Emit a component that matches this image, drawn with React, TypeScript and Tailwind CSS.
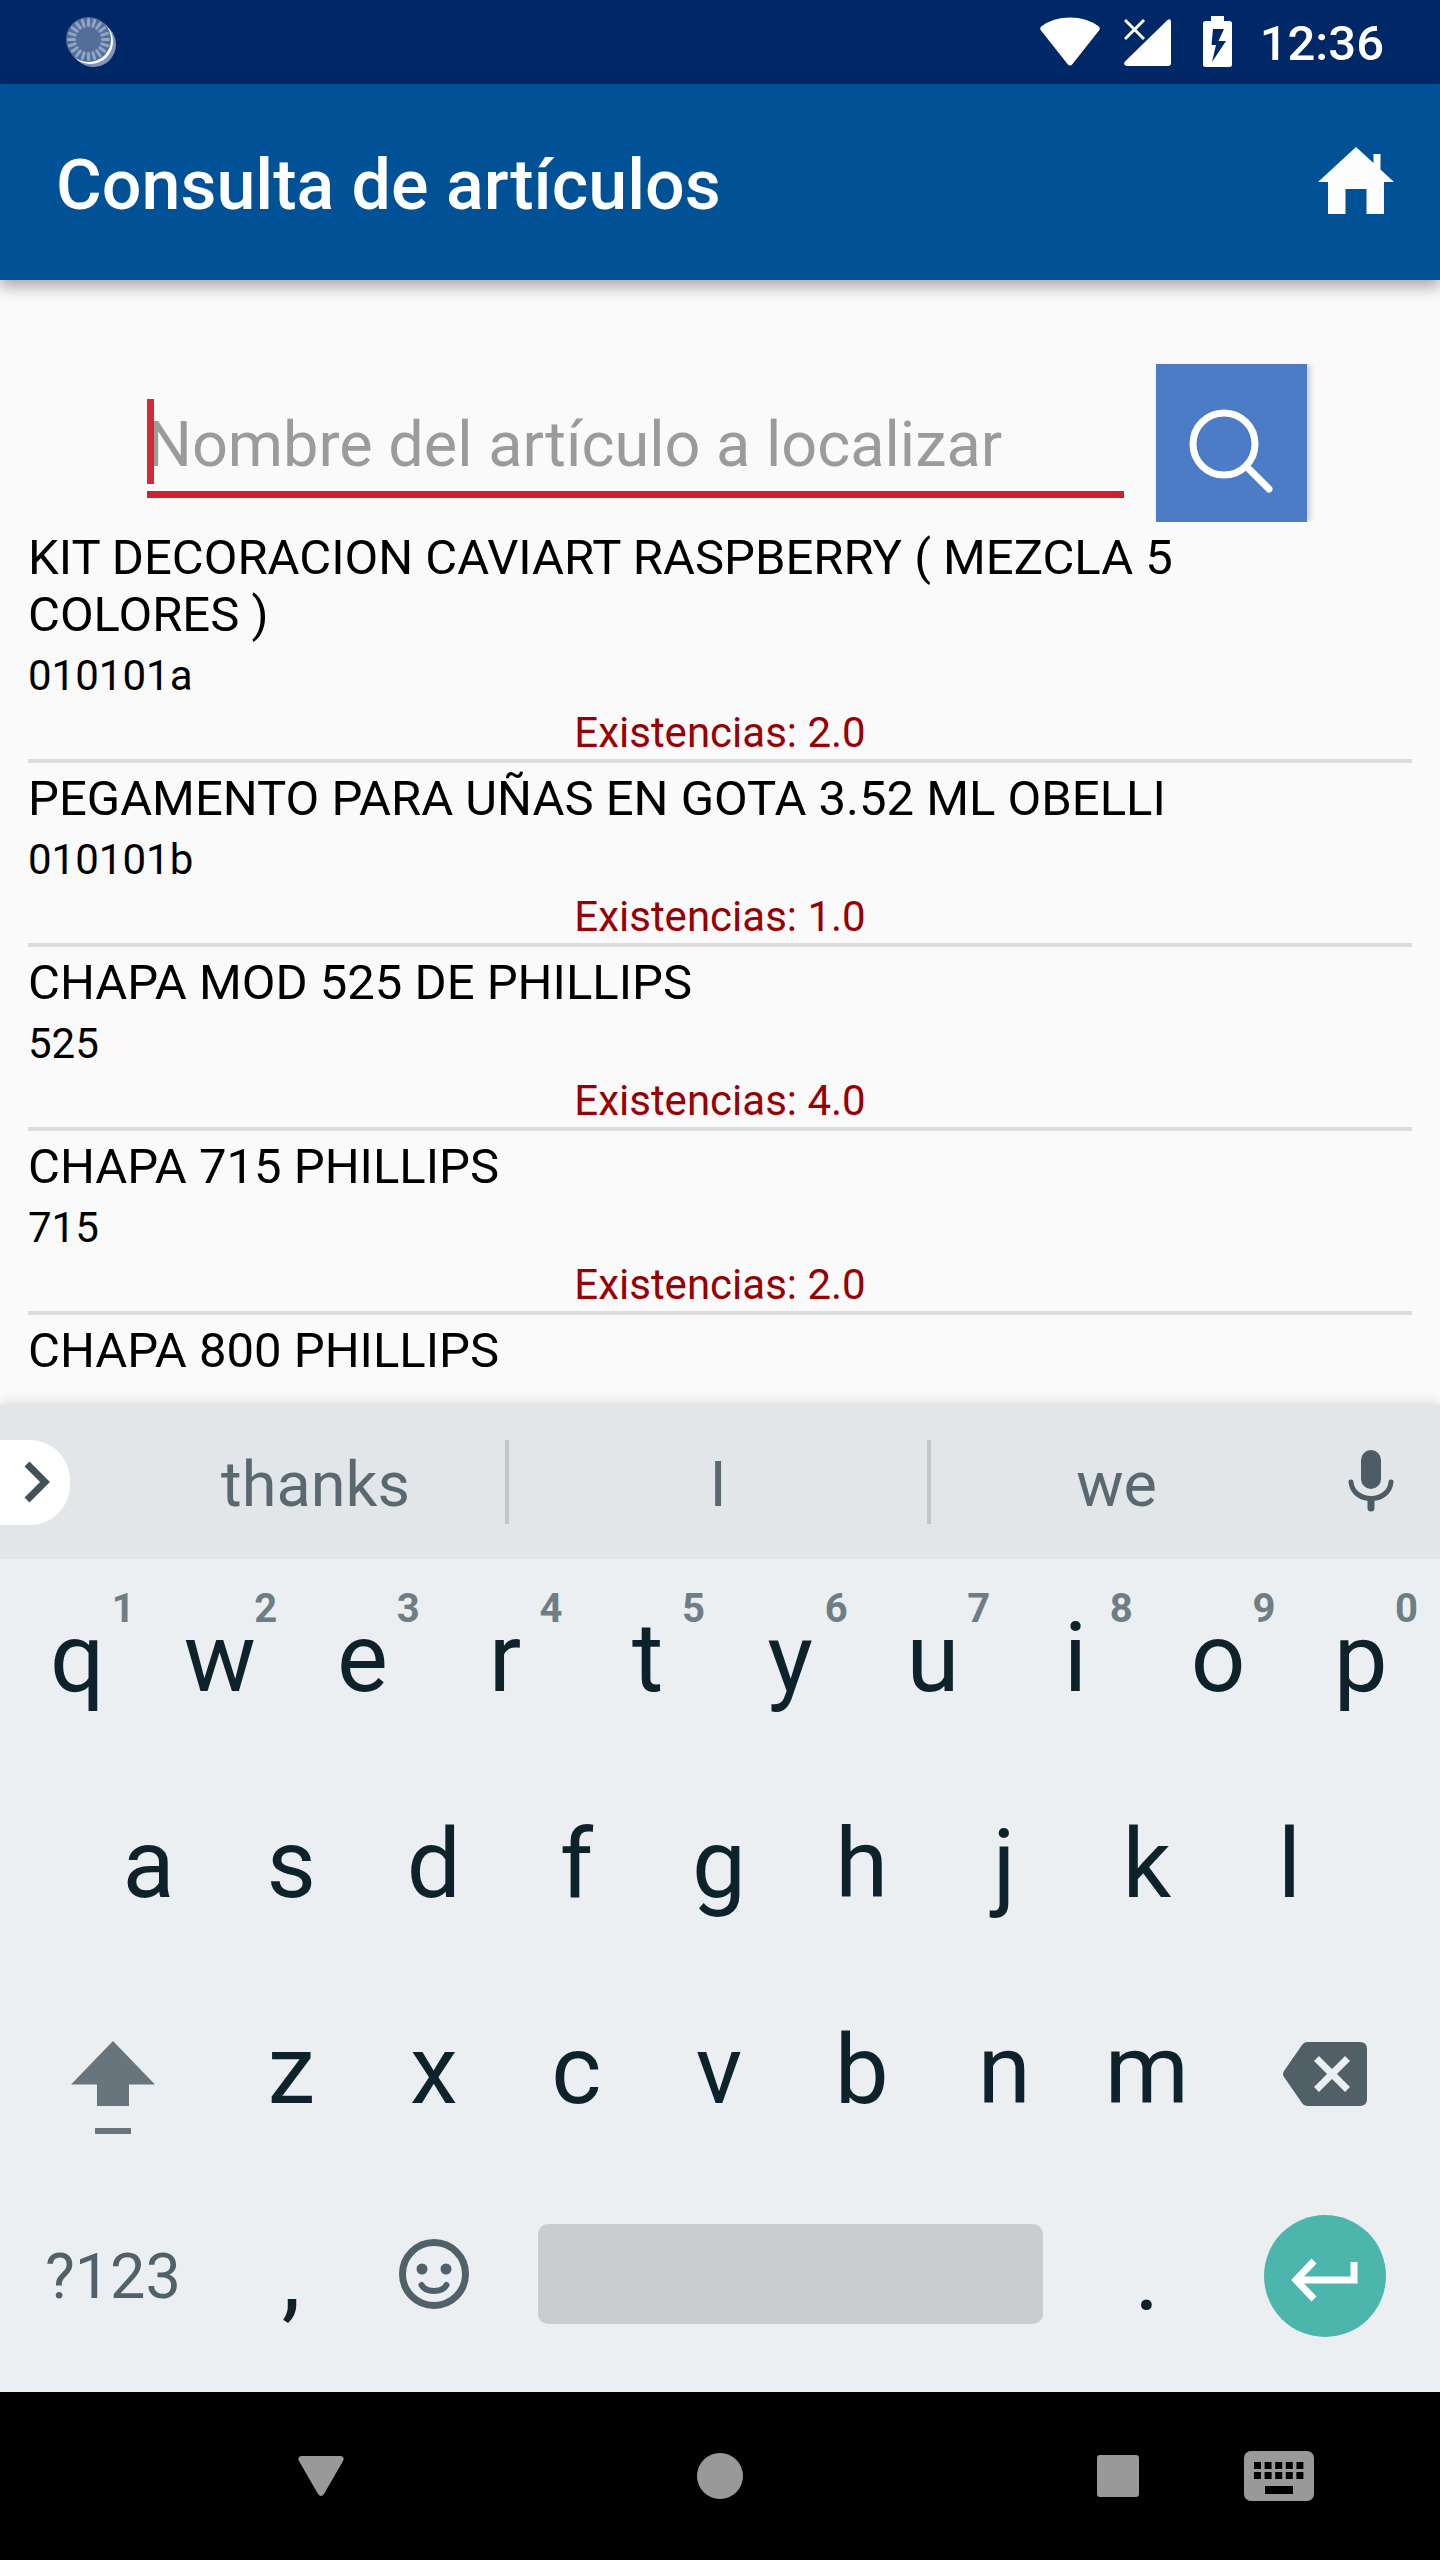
import React from "react";

type Item = { name: string; code?: string; stock?: string };

const items: Item[] = [
  { name: "KIT DECORACION CAVIART RASPBERRY ( MEZCLA 5 COLORES )", code: "010101a", stock: "2.0" },
  { name: "PEGAMENTO PARA UÑAS EN GOTA 3.52 ML OBELLI", code: "010101b", stock: "1.0" },
  { name: "CHAPA MOD 525 DE PHILLIPS", code: "525", stock: "4.0" },
  { name: "CHAPA 715 PHILLIPS", code: "715", stock: "2.0" },
  { name: "CHAPA 800 PHILLIPS" },
];

const topRow = ["q", "w", "e", "r", "t", "y", "u", "i", "o", "p"];
const middleRow = ["a", "s", "d", "f", "g", "h", "j", "k", "l"];
const lowerRow = ["z", "x", "c", "v", "b", "n", "m"];

const spokes = Array.from({ length: 20 }, (_, i) => i * 18);

function StatusBar() {
  return (
    <div className="flex h-[84px] items-center bg-[#002766] pr-[56px] pl-[66px] text-white">
      <svg width="52" height="52" viewBox="0 0 52 52" aria-hidden="true">
        <circle cx="27.5" cy="28.5" r="22.5" fill="#8095b8" />
        <circle cx="24.5" cy="25.5" r="22.5" fill="#fff" />
        <circle cx="22.5" cy="23.5" r="22.5" fill="#536e9b" />
        {spokes.map((a) => (
          <path key={a} d="M22.500 3.500v6" stroke="#93a5c4" strokeWidth="3" strokeLinecap="round" transform={`rotate(${a} 22.5 23.5)`} />
        ))}
      </svg>
      <div className="ml-auto flex items-center">
        <svg className="mr-6" width="60" height="50" viewBox="0 0 60 50" aria-hidden="true">
          <path d="M1.2 9.5Q13 .5 30 .5T58.8 9.5Q60.600 11.300 59 13.500L32.500 47Q30 50 27.500 47L1 13.500Q-.6 11.300 1.200 9.500z" fill="currentColor" />
        </svg>
        <svg className="mr-8" width="47" height="50" viewBox="0 0 47 50" aria-hidden="true">
          <path d="M43 3.500Q47 .500 47 5v41q0 3-3 3H3Q-1.500 48 1 44.500z" fill="currentColor" />
          <path d="M1 3l19 19M20 3L1 22" stroke="currentColor" strokeWidth="3" />
        </svg>
        <svg className="mr-7" width="29" height="52" viewBox="0 0 29 52" aria-hidden="true">
          <path fillRule="evenodd" d="M8 0h13v5h5.500q2.500 0 2.500 2.500v41q0 2.500-2.500 2.500h-24Q0 51 0 48.500v-41Q0 5 2.500 5H8zM10 13L8.500 29h4.500L9 46l14-21h-7.500L21 13z" fill="currentColor" />
        </svg>
        <span className="pt-1 text-[49px] leading-[58px] font-medium">12:36</span>
      </div>
    </div>
  );
}

function AppBar() {
  return (
    <header className="relative z-10 flex h-[196px] items-center bg-[#005196] pr-[46px] pl-[56px] text-white shadow-[0_7px_14px_rgba(0,0,0,0.32)]">
      <h1 className="pt-[6px] text-[70px] leading-[82px] font-medium">Consulta de artículos</h1>
      <button type="button" aria-label="Inicio" className="ml-auto pb-1">
        <svg width="76" height="67" viewBox="0 0 76 67" aria-hidden="true">
          <path d="M38 0L55.500 16V7H62.500V22.500L76 35H66V67H48.500V42H27.500V67H10V35H0z" fill="#fdfdfd" />
        </svg>
      </button>
    </header>
  );
}

function SearchForm() {
  return (
    <form className="flex pt-[84px] pr-[133px] pl-[147px]" onSubmit={(e) => e.preventDefault()}>
      <div className="relative mr-8 flex-1 self-start pt-[35px]">
        <input
          type="text"
          aria-label="Nombre del artículo a localizar"
          placeholder="Nombre del artículo a localizar"
          className="block h-[99px] w-full border-b-[7px] border-[#d01f2e] bg-transparent pb-[2px] text-[63px] leading-[74px] text-black outline-none placeholder:text-[#9b9b9b] placeholder:opacity-100"
        />
        <span className="absolute top-[35px] left-0 h-[85px] w-[7px] bg-[#d01f2e]/95" />
      </div>
      <button
        type="submit"
        aria-label="Buscar"
        className="flex h-[158px] w-[151px] items-center justify-center bg-[#4c7cc6] shadow-[3px_0_6px_rgba(0,0,0,0.2)] [clip-path:inset(0_-12px)]"
      >
        <svg width="151" height="158" viewBox="0 0 151 158" fill="none" stroke="#fff" aria-hidden="true">
          <circle cx="68" cy="80" r="31" strokeWidth="7" />
          <path d="M91 103L113 125" strokeWidth="7" strokeLinecap="round" />
        </svg>
      </button>
    </form>
  );
}

function ItemList() {
  return (
    <ul className="px-7 text-black">
      {items.map((item) => (
        <li key={item.name} className="border-b-4 border-[#dcdcdc] pt-[7px] last:border-b-0">
          <h2 className="pr-16 text-[49px] leading-[57px]">{item.name}</h2>
          {item.code && <p className="mt-[6px] text-[42px] leading-[53px]">{item.code}</p>}
          {item.stock && (
            <p className="mt-1 text-center text-[42px] leading-[53px] text-[#970004]">Existencias: {item.stock}</p>
          )}
        </li>
      ))}
    </ul>
  );
}

function LetterKey({ letter, hint }: { letter: string; hint?: string }) {
  return (
    <button type="button" className="relative col-span-2 flex items-center justify-center pb-2 text-[96px] leading-[112px] text-[#0e222b]">
      {letter}
      {hint && <span className="absolute top-[26px] right-[14px] text-[40px] leading-[48px] font-bold text-[#6f7d84]">{hint}</span>}
    </button>
  );
}

function Suggestions() {
  return (
    <div className="flex h-[154px] items-center bg-[#e2e6e9] text-[63px] leading-[74px] text-[#5a6970]">
      <div className="w-[126px]">
        <button type="button" aria-label="Más opciones" className="flex h-[85px] w-[70px] items-center rounded-r-[40px] bg-white pl-[22px]">
          <svg width="30" height="44" viewBox="0 0 30 44" fill="none" stroke="#43525a" strokeWidth="7" aria-hidden="true">
            <path d="M5 4L23 22L5 40" />
          </svg>
        </button>
      </div>
      <button type="button" className="flex-[379] pt-[6px]">thanks</button>
      <span className="h-[84px] w-[4px] bg-[#c2c6c9]" />
      <button type="button" className="flex-[418] pt-[6px]">I</button>
      <span className="h-[84px] w-[4px] bg-[#c2c6c9]" />
      <button type="button" className="flex-[371] pt-[6px]">we</button>
      <button type="button" aria-label="Dictado por voz" className="flex w-[138px] justify-center">
        <svg width="48" height="64" viewBox="0 0 48 64" fill="none" stroke="#4e5d65" strokeLinecap="round" aria-hidden="true">
          <rect x="14" y="0" width="20" height="39" rx="10" fill="#4e5d65" stroke="none" />
          <path d="M4 32C6 54 42 54 44 32" strokeWidth="5" />
          <path d="M24 50V58" strokeWidth="7" />
        </svg>
      </button>
    </div>
  );
}

const rowClass = "grid h-[206px] grid-cols-20 pr-2 pl-[6px]";

function Keyboard() {
  return (
    <section aria-label="Teclado" className="relative bg-[#ebeff2] shadow-[0_-3px_12px_rgba(0,0,0,0.12)]">
      <Suggestions />
      <div className="pb-[9px]">
        <div className={rowClass}>
          {topRow.map((l, i) => (
            <LetterKey key={l} letter={l} hint={String((i + 1) % 10)} />
          ))}
        </div>
        <div className={rowClass}>
          <span />
          {middleRow.map((l) => (
            <LetterKey key={l} letter={l} />
          ))}
        </div>
        <div className={rowClass}>
          <button type="button" aria-label="Mayúsculas" className="col-span-3 flex items-center justify-center">
            <svg width="84" height="126" viewBox="0 -10 84 126" fill="#68757c" aria-hidden="true">
              <path d="M42 20L84 63.500H58V85H26V63.500H0z" />
              <path d="M24 107h36v6H24z" />
            </svg>
          </button>
          {lowerRow.map((l) => (
            <LetterKey key={l} letter={l} />
          ))}
          <button type="button" aria-label="Borrar" className="col-span-3 flex items-center justify-center">
            <svg width="84" height="64" viewBox="0 0 84 64" aria-hidden="true">
              <path d="M24 0H77Q84 0 84 7V57Q84 64 77 64H24Q21 64 19 61L1 35Q-1 32 1 29L19 3Q21 0 24 0z" fill="#515f67" />
              <path d="M33.500 16.500L64.500 47.500M64.500 16.500L33.500 47.500" stroke="#eceff1" strokeWidth="7" />
            </svg>
          </button>
        </div>
        <div className={rowClass}>
          <button type="button" className="col-span-3 pb-[6px] text-[63px] leading-[74px] text-[#51616a]">?123</button>
          <LetterKey letter="," />
          <button type="button" aria-label="Emojis" className="col-span-2 flex items-center justify-center pb-3">
            <svg width="70" height="70" viewBox="0 0 70 70" fill="none" stroke="#51616a" aria-hidden="true">
              <circle cx="35" cy="35" r="31.500" strokeWidth="7" />
              <circle cx="23" cy="30" r="5.500" fill="#51616a" stroke="none" />
              <circle cx="47" cy="30" r="5.500" fill="#51616a" stroke="none" />
              <path d="M22.500 46C27 54 43 54 47.500 46" strokeWidth="6" strokeLinecap="round" />
            </svg>
          </button>
          <div className="col-span-8 flex items-center px-[33px] pb-3">
            <button type="button" aria-label="Espacio" className="h-[100px] w-full rounded-[10px] bg-[#c9cdd0]" />
          </div>
          <LetterKey letter="." />
          <div className="col-span-3 flex items-center justify-center pb-2">
            <button type="button" aria-label="Intro" className="flex size-[122px] items-center justify-center rounded-full bg-[#4db6ac]">
              <svg width="68" height="52" viewBox="0 0 68 52" fill="none" stroke="#fff" strokeWidth="7" aria-hidden="true">
                <path d="M63 12V30H7" />
                <path d="M23 11L5 30L23 49" />
              </svg>
            </button>
          </div>
        </div>
      </div>
    </section>
  );
}

function NavBar() {
  return (
    <nav className="grid h-[168px] grid-cols-[200fr_242fr_555fr_242fr_80fr_121fr] bg-black">
      <span />
      <button type="button" aria-label="Atrás" className="flex items-center justify-center">
        <svg width="46" height="40" viewBox="0 0 46 40" fill="#999" aria-hidden="true">
          <path d="M3 0H43Q47 1 45 5L26 38Q23 42 20 38L1 5Q-1 1 3 0z" />
        </svg>
      </button>
      <button type="button" aria-label="Inicio del dispositivo" className="flex items-center justify-center">
        <svg width="46" height="46" viewBox="0 0 46 46" fill="#999" aria-hidden="true">
          <circle cx="23" cy="23" r="23" />
        </svg>
      </button>
      <button type="button" aria-label="Recientes" className="flex items-center justify-center">
        <svg width="42" height="42" viewBox="0 0 42 42" fill="#999" aria-hidden="true">
          <rect width="42" height="42" rx="3" />
        </svg>
      </button>
      <button type="button" aria-label="Cambiar teclado" className="flex items-center justify-center">
        <svg width="70" height="50" viewBox="0 0 70 50" aria-hidden="true">
          <rect width="70" height="50" rx="7" fill="#999" />
          {[0, 1, 2, 3, 4].map((i) => (
            <path key={i} d="M10 11h7v7h-7zM10 21h7v7h-7z" transform={`translate(${i * 10.6} 0)`} />
          ))}
          <path d="M21 35h28v8H21z" />
        </svg>
      </button>
    </nav>
  );
}

export default function App() {
  return (
    <div className="flex min-h-screen flex-col bg-[#fafafa] font-[Roboto,sans-serif]">
      <StatusBar />
      <AppBar />
      <main className="flex-1">
        <SearchForm />
        <ItemList />
      </main>
      <Keyboard />
      <NavBar />
    </div>
  );
}
